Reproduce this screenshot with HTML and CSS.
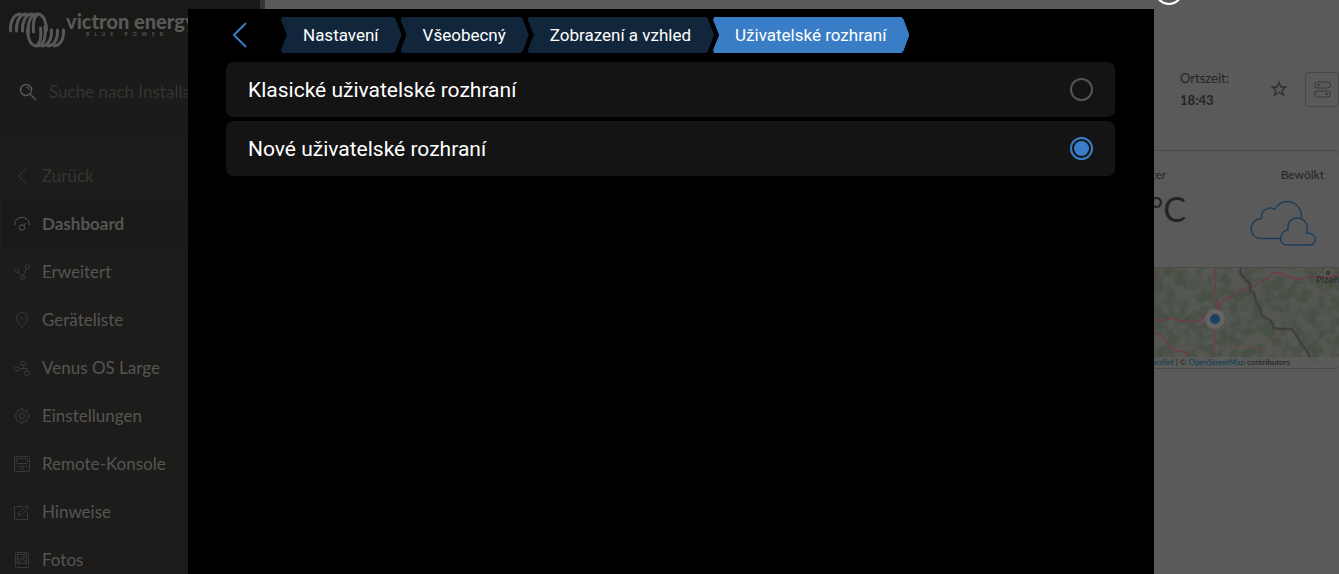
FILE: index.html
```html
<!DOCTYPE html>
<html lang="de">
<head>
    <meta charset="UTF-8">
    <meta name="viewport" content="width=device-width, initial-scale=1.0">
    <title>Remote-Konsole</title>
    <link rel="stylesheet" href="styles.css">
</head>
<body>
    <div class="page">
        <aside class="sidebar">
            <div class="sidebar-top">
                <a href="#" class="brand">
                    <svg class="brand-mark" width="58" height="38" viewBox="0 0 58 38" fill="none" stroke="currentColor" stroke-width="3" stroke-linecap="round">
                        <path d="M2.500 20C2 12 5 3.500 12 3"/>
                        <path d="M8.500 20C8 12 11 3.500 18 3"/>
                        <path d="M14.500 20C14 12 17 3.500 24 3"/>
                        <path d="M20.500 22C19 12 23 3 29 3C35 3 38 10 38.500 19"/>
                        <path d="M19.500 19C20 28 23 35 29 35C36 35 38 26 37 16"/>
                        <path d="M25.500 21C24.500 13 26 6 29 4M32.500 17C33.500 26 32 32 29 34"/>
                        <path d="M34 35C41 34.500 44 27 43.500 19"/>
                        <path d="M40 35C47 34.500 50 27 49.500 19"/>
                        <path d="M46 35C53 34.500 56 27 55.500 19"/>
                    </svg>
                    <span class="brand-text">
                        <span class="brand-name">victron energy</span>
                        <span class="brand-sub">BLUE POWER</span>
                    </span>
                </a>
                <label class="search">
                    <svg width="18" height="18" viewBox="0 0 18 18" fill="none" stroke="currentColor" stroke-width="1.5">
                        <circle cx="7" cy="7" r="5.500"/>
                        <path d="M11 11L17 17"/>
                        <path d="M7 4A3 3 0 0 1 10 7" stroke-width="1"/>
                    </svg>
                    <input type="text" placeholder="Suche nach Installation" aria-label="Suche nach Installation">
                </label>
            </div>
            <nav class="menu">
                <a href="#" class="menu-item back">
                    <svg class="icon" viewBox="0 0 16 16"><path d="M12 0.500L4 8L12 15.500"/></svg>
                    Zurück
                </a>
                <a href="#" class="menu-item active">
                    <svg class="icon" viewBox="0 0 16 16"><path d="M.7 9.500V8A7.300 6.700 0 0 1 15.300 8V9.500"/><circle cx="8" cy="11.500" r="2.700"/><path d="M9.500 9.500L12 7"/></svg>
                    Dashboard
                </a>
                <a href="#" class="menu-item">
                    <svg class="icon" viewBox="0 0 16 16"><circle cx="2.700" cy="6.500" r="2"/><circle cx="13.300" cy="2.700" r="2"/><circle cx="8.500" cy="13.300" r="2"/><path d="M4 8L7.200 11.600M9.300 11.400L12.500 4.600"/></svg>
                    Erweitert
                </a>
                <a href="#" class="menu-item">
                    <svg class="icon" viewBox="0 0 16 16"><path d="M8 15.500C6 12.500 2.500 9.500 2.500 6A5.500 5.500 0 0 1 13.500 6C13.500 9.500 10 12.500 8 15.500Z"/><path d="M5 6.500C6 4 7.300 5 8 6S10 7.500 11 5.500"/></svg>
                    Geräteliste
                </a>
                <a href="#" class="menu-item">
                    <svg class="icon" viewBox="0 0 16 16"><rect x="6.500" y="1.500" width="5" height="3.500" rx="1"/><rect x=".5" y="7" width="5" height="3.500" rx="1"/><rect x="10.500" y="11.500" width="5" height="3.500" rx="1"/><path d="M9 5V8.500M5.500 8.500H13V11.500"/></svg>
                    Venus OS Large
                </a>
                <a href="#" class="menu-item">
                    <svg class="icon" viewBox="0 0 16 16"><path d="M6.600 2.700L7 .7H9L9.400 2.700L10.800 3.200L12.500 2.100L13.900 3.500L12.800 5.200L13.300 6.600L15.300 7V9L13.300 9.400L12.800 10.800L13.900 12.500L12.500 13.900L10.800 12.800L9.400 13.300L9 15.300H7L6.600 13.300L5.200 12.800L3.500 13.900L2.100 12.500L3.200 10.800L2.700 9.400L.7 9V7L2.700 6.600L3.200 5.200L2.100 3.500L3.500 2.100L5.200 3.200Z"/><circle cx="8" cy="8" r="2.600"/></svg>
                    Einstellungen
                </a>
                <a href="#" class="menu-item">
                    <svg class="icon" viewBox="0 0 16 16"><rect x=".5" y=".5" width="15" height="15" rx="1"/><rect x="2.500" y="2.500" width="11" height="5" rx="1"/><circle cx="8" cy="11.800" r="1.500"/><path d="M3 10.500H5M11 10.500H13"/></svg>
                    Remote-Konsole
                </a>
                <a href="#" class="menu-item">
                    <svg class="icon" viewBox="0 0 16 16"><path d="M9 2.500H.5V15.500H13.500V8"/><path d="M4.500 11.500L5.500 8L13 .8L15.300 3L8 10.500Z"/><path d="M11.500 2.500L13.500 4.500"/></svg>
                    Hinweise
                </a>
                <a href="#" class="menu-item">
                    <svg class="icon" viewBox="0 0 16 16"><rect x="1.500" y=".5" width="13" height="15" rx="1"/><rect x="3.500" y="2.500" width="9" height="9"/><path d="M3.500 5L6 7.500L8 6L12.500 11M4 11L7 8"/><circle cx="10" cy="4.800" r="1"/></svg>
                    Fotos
                </a>
            </nav>
        </aside>

        <main class="content">
            <header class="site-header">
                <div class="local-time">
                    <span>Ortszeit:</span>
                    <strong>18:43</strong>
                </div>
                <button type="button" class="star" aria-label="Favorit">
                    <svg width="16" height="16" viewBox="0 0 16 16" fill="none" stroke="currentColor" stroke-width="1.300"><path d="M8 1.300L10 6H15L11 9.200L12.500 14.300L8 11.300L3.500 14.300L5 9.200L1 6H6Z"/></svg>
                </button>
                <button type="button" class="toggles" aria-label="Steuerung">
                    <svg width="17" height="17" viewBox="0 0 17 17" fill="none" stroke="currentColor"><rect x=".5" y="1" width="16" height="6" rx="3"/><rect x=".5" y="10" width="16" height="6" rx="3"/><path d="M3 4H6M4.500 2.500V5.500M11 13H14M12.500 11.500V14.500"/></svg>
                </button>
            </header>
            <section class="weather">
                <div class="weather-now">
                    <span>Wetter</span>
                    <span class="degrees">°C</span>
                </div>
                <div class="weather-sky">
                    <span>Bewölkt</span>
                    <svg width="66" height="46" viewBox="0 0 66 46" fill="none" stroke="currentColor" stroke-width="1.400"><path d="M31.500 38.500H11C5 38.500 1 34 1 29C1 23 6 18.500 11.500 18.500C10.500 11 18 5.500 24.500 9.500C28 4 32 1.500 37 1.500C46 1.500 52 9 51.500 18"/><path d="M37 45C27 45 30 30 38 30C37 23 41 18 47.500 18C55 18 59 26 56.500 33C67 32 68 45 59.500 45Z"/></svg>
                </div>
            </section>
            <section class="map">
                <svg class="map-tiles" viewBox="0 0 186 100" preserveAspectRatio="xMaxYMin slice">
                    <filter id="forest" x="0" y="0" width="100%" height="100%" color-interpolation-filters="sRGB">
                        <feTurbulence type="fractalNoise" baseFrequency="0.090" numOctaves="5" seed="8"/>
                        <feColorMatrix values="0 0 0 0 0.250  0 0 0 0 0.300  0 0 0 0 0.240  0 4 0 0 -1.600"/>
                    </filter>
                    <rect width="186" height="100" fill="#555752"/>
                    <rect width="186" height="100" filter="url(#forest)" opacity=".6"/>
                    <g fill="none" stroke="#6d3d49" stroke-width="1.500">
                        <path d="M63 0L61 8L63 15L61 22L64 36L67 42L62 50L61 62L62 70L60 84L58 100"/>
                        <path d="M0 51L8 53L17 50L28 53L40 54L48 52L53 46L62 43L67 36L73 30L80 28L87 23L96 21L106 14L114 11L120 5L129 5L136 9L147 11L157 8L168 10L186 7"/>
                        <path d="M0 65L7 66L12 72L18 80L24 83L33 84L37 90M4 1L2 8L0 10"/>
                    </g>
                    <path d="M74 84L78 80L88 80L95 77L104 81L112 80L117 71L127 66M83 74L89 78M171 12L169 25M48 53L54 57M28 52L33 48" fill="none" stroke="#704d46"/>
                    <path d="M88 0L87 5L93 12L97 16L97 22L101 25L103 34L107 40L108 47L118 53L121 60L127 61L139 61L144 68L149 77L154 83L157 90L165 95" fill="none" stroke="#413e42" stroke-width="2.500"/>
                    <circle cx="175" cy="5" r="1.500" fill="none" stroke="#242424"/>
                    <circle cx="62" cy="51" r="10" fill="#646464"/>
                    <circle cx="62" cy="51" r="5" fill="#1c4061"/>
                </svg>
                <span class="city">Plzeň</span>
                <div class="attribution"><a href="#">Leaflet</a> | © <a href="#">OpenStreetMap</a> contributors</div>
            </section>
        </main>
    </div>

    <button type="button" class="close" aria-label="Schließen"></button>

    <div class="console" role="dialog" aria-label="Remote-Konsole" lang="cs">
        <nav class="crumbs">
            <a href="#" class="console-back" aria-label="Zpět">
                <svg width="16" height="26" viewBox="0 0 16 26" fill="none" stroke="currentColor" stroke-width="2"><path d="M14 1L2 13L14 25"/></svg>
            </a>
            <a href="#" class="crumb">Nastavení</a>
            <a href="#" class="crumb">Všeobecný</a>
            <a href="#" class="crumb">Zobrazení a vzhled</a>
            <a href="#" class="crumb current">Uživatelské rozhraní</a>
        </nav>
        <form class="options">
            <label class="option">
                Klasické uživatelské rozhraní
                <input type="radio" name="ui" value="classic">
            </label>
            <label class="option">
                Nové uživatelské rozhraní
                <input type="radio" name="ui" value="new" checked>
            </label>
        </form>
    </div>
</body>
</html>
```
FILE: styles.css
```css
* {
    box-sizing: border-box;
}

body {
    margin: 0;
    height: 100vh;
    overflow: hidden;
    position: relative;
    font-family: Lato, sans-serif;
    font-size: 13px;
    color: #242424;
    background: #5a5a5a;
}

a {
    color: inherit;
    text-decoration: none;
}

button {
    padding: 0;
    background: none;
    border: none;
    color: inherit;
    cursor: pointer;
}

.page {
    display: flex;
    height: 100%;
}

/* Sidebar */
.sidebar {
    flex: 0 0 265px;
    background: #1d1c1a;
    border-right: 5px solid #353535;
    overflow: hidden;
}

.sidebar-top {
    height: 136px;
    padding: 11px 8px 0;
    background: #191917;
}

.brand {
    display: flex;
    height: 61px;
    color: #585856;
}

.brand-text {
    display: flex;
    flex-direction: column;
    white-space: nowrap;
}

.brand-name {
    font-size: 20px;
    font-weight: 900;
    line-height: 21px;
}

.brand-sub {
    padding-left: 20px;
    font-size: 5px;
    font-weight: bold;
    letter-spacing: 5px;
    line-height: 5px;
}

.search {
    display: flex;
    align-items: center;
    gap: 12px;
    height: 40px;
    padding: 0 11px;
    border-radius: 3px;
    background: #1c1b19;
    color: #565654;
}

.search svg {
    flex: none;
}

.search input {
    width: 100%;
    padding: 0 0 2px;
    border: none;
    outline: none;
    background: none;
    font: 17px Lato, sans-serif;
    color: inherit;
}

.search input::placeholder {
    color: #343432;
}

.menu {
    display: flex;
    flex-direction: column;
    padding: 16px 0 0 2px;
}

.menu-item {
    display: flex;
    flex: none;
    align-items: center;
    gap: 12px;
    height: 48px;
    padding: 0 12px 1px;
    border-radius: 3px;
    font-size: 17px;
    color: #555553;
}

.menu-item.back {
    color: #353533;
}

.menu-item.active {
    background: #191917;
    font-weight: bold;
}

.icon {
    width: 16px;
    height: 16px;
    fill: none;
    stroke: #393937;
}

.active .icon {
    stroke: #555553;
}

/* Dashboard behind the console */
.content {
    flex: 1;
    min-width: 0;
}

.site-header {
    display: flex;
    align-items: center;
    justify-content: flex-end;
    height: 150px;
    padding-top: 28px;
}

.local-time {
    display: flex;
    flex-direction: column;
    margin-right: 42px;
    line-height: 22px;
}

.star {
    display: flex;
    margin-right: 18px;
    color: #303030;
}

.toggles {
    display: flex;
    align-items: center;
    justify-content: center;
    width: 34px;
    height: 35px;
    border: 1px solid #484848;
    border-radius: 4px;
    color: #383838;
}

.weather {
    display: flex;
    justify-content: flex-end;
    gap: 64px;
    height: 118px;
    padding: 16px 15px 0;
    border: solid #494949;
    border-width: 1px 0;
    border-radius: 0 4px 0 0;
    font-size: 12px;
}

.weather-now,
.weather-sky {
    display: flex;
    flex-direction: column;
    line-height: 16px;
}

.degrees {
    margin-left: 20px;
    font-size: 34px;
    line-height: 52px;
}

.weather-sky {
    align-items: flex-end;
}

.weather-sky svg {
    margin: 17px 8px 0 0;
    color: #203d57;
}

.map {
    position: relative;
    height: 101px;
    border-bottom: 1px solid #494949;
    border-radius: 0 0 4px 0;
    overflow: hidden;
}

.map-tiles {
    float: right;
    width: 186px;
    height: 100px;
}

.city {
    position: absolute;
    top: 5px;
    right: 0;
    font: 9px/14px "Noto Sans", sans-serif;
}

.attribution {
    position: absolute;
    right: 0;
    bottom: 0;
    width: 189px;
    height: 11px;
    background: rgba(92, 92, 92, 0.8);
    font-size: 8px;
    line-height: 11px;
    color: #1c1c1c;
}

.attribution a {
    color: #093d52;
}

/* Remote console */
.close {
    position: absolute;
    top: -23px;
    right: 156px;
    width: 28px;
    height: 28px;
    border: 2px solid #fff;
    border-radius: 50%;
}

.console {
    position: absolute;
    top: 9px;
    right: 185px;
    bottom: 0;
    left: 188px;
    padding: 8px 39px 0 38px;
    background: #000;
    font-family: Roboto, sans-serif;
    color: #fff;
}

.crumbs {
    display: flex;
    height: 36px;
    margin-bottom: 9px;
}

.console-back {
    display: flex;
    align-items: center;
    width: 55px;
    padding-left: 6px;
    color: #387dc5;
}

.crumb {
    margin-right: -1px;
    padding: 0 23px 0 22px;
    background: #11263b;
    clip-path: polygon(1px 0, calc(100% - 8px) 0, calc(100% - 6px) 2px, 100% 50%, calc(100% - 6px) calc(100% - 2px), calc(100% - 8px) 100%, 1px 100%, 0 calc(100% - 3px), 6px 50%, 0 3px);
    font-size: 17px;
    line-height: 36px;
    white-space: nowrap;
}

.crumb.current {
    background: #387dc5;
}

.options {
    display: flex;
    flex-direction: column;
    gap: 4px;
}

.option {
    display: flex;
    align-items: center;
    justify-content: space-between;
    height: 55px;
    padding: 0 22px;
    border-radius: 7px;
    background: #141414;
    font-size: 21px;
}

.option input {
    appearance: none;
    width: 23px;
    height: 23px;
    margin: 0;
    border: 2px solid #555450;
    border-radius: 50%;
}

.option input:checked {
    border-color: #387dc5;
    background: #387dc5;
    background-clip: content-box;
    padding: 2px;
}
```
